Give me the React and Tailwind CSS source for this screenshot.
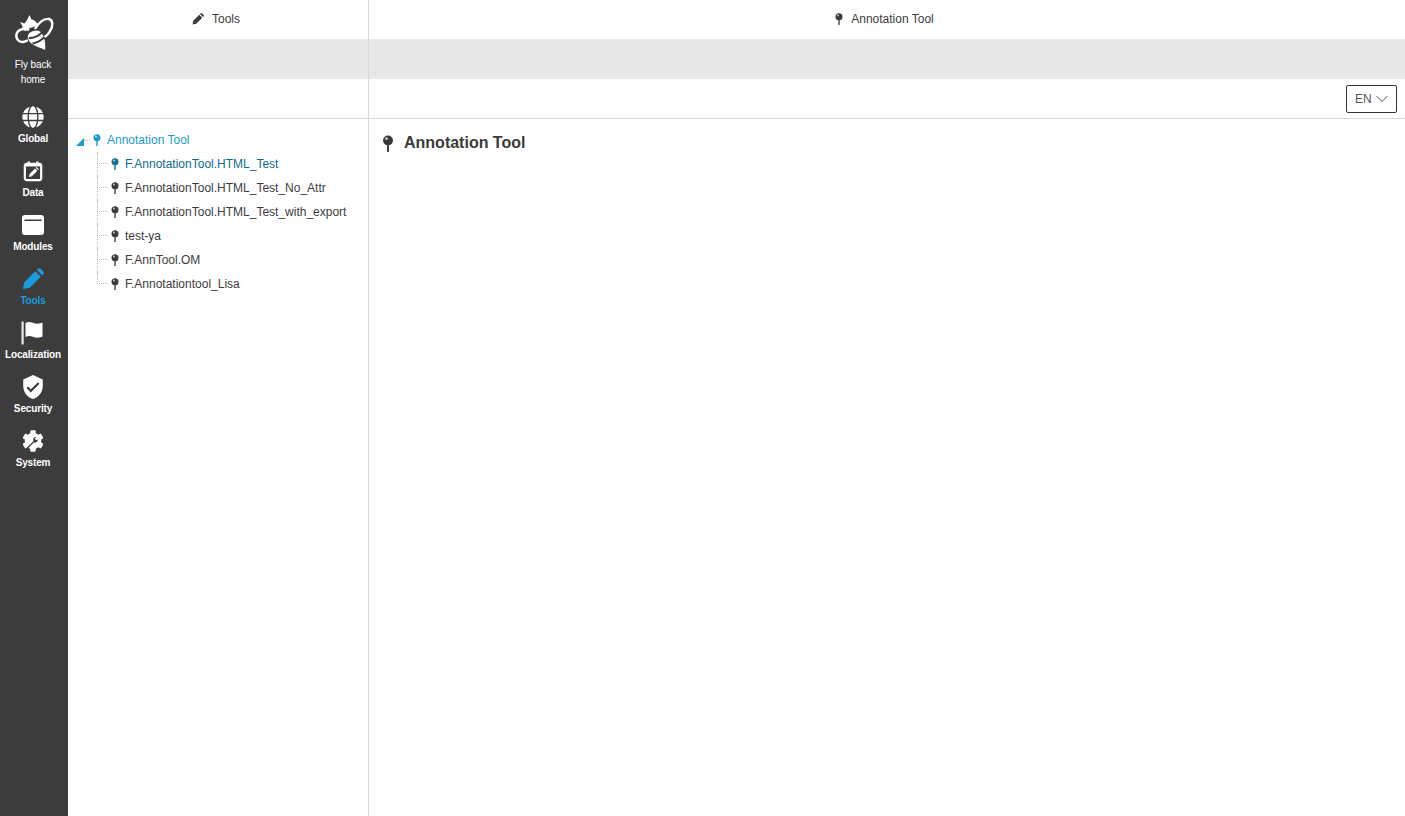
import { FaGlobe, FaCog } from 'react-icons/fa';
import { MdVerifiedUser } from 'react-icons/md';
import { ChevronDown } from 'lucide-react';

function BeeLogo() {
  return (
    <svg viewBox="10 10 46 44" className="w-[46px] h-[44px]" fill="none" stroke="white">
      <path d="M35 29C38 23 44 18 49 19C53 20 53.500 26 50 31C48 35 45 37 42 38" strokeWidth="2.400" />
      <path d="M29 30C24 28 18 29 16.500 34C15.500 39 19 42.500 23 42C25 41.700 26.500 41 28 40" strokeWidth="2.400" />
      <path d="M20 22L24.500 23.500L27 20L29.500 15L31.500 19.500C35 20 38 23 38 26.500C33 26.500 28 28.500 25 31C23 29.500 22 27.500 22.500 26Z" fill="white" stroke="none" />
      <path d="M28 34C32 29.500 38 29 41.500 32C45 37 46.500 44 45.500 50.500C40 48 32 46 29 41.500C27 38.500 27 36 28 34Z" fill="white" stroke="#3c3c3c" strokeWidth="1" />
      <path d="M29 38C34 38 38.500 36 42 32.500M32.500 43.500C37.500 42.500 41 40.500 44 37.500" stroke="#3c3c3c" strokeWidth="1.900" />
    </svg>
  );
}

function PenIcon({ className }) {
  return (
    <svg viewBox="0 0 24 24" className={className} fill="currentColor">
      <path d="M1 23L2.500 15.500L14.500 3.500L20.500 9.500L8.500 21.500Z" />
      <path d="M16 2L17 1C18 0 19.500 0 20.500 1L23 3.500C24 4.500 24 6 23 7L22 8Z" />
    </svg>
  );
}

function DataIcon() {
  return (
    <svg viewBox="0 0 22 24" className="w-[20px] h-[22px]">
      <path d="M5 1.500h2.500v3H5zM14.500 1.500H17v3h-2.500z" fill="white" />
      <rect x="2" y="4" width="18" height="18" rx="2" fill="none" stroke="white" strokeWidth="2.400" />
      <path d="M2 4h18v3H2z" fill="white" />
      <path d="M6.500 18.500l.8-3.300 6-6 2.500 2.500-6 6zM14 8.500l1-1 2.500 2.500-1 1z" fill="white" />
    </svg>
  );
}

function ModulesIcon() {
  return (
    <svg viewBox="0 0 22 20" className="w-[22px] h-[20px]">
      <path fillRule="evenodd" d="M3 0h16a3 3 0 0 1 3 3v14a3 3 0 0 1-3 3H3a3 3 0 0 1-3-3V3a3 3 0 0 1 3-3zM2.500 4.500v1.500h17V4.500z" fill="white" />
    </svg>
  );
}

function FlagIcon() {
  return (
    <svg viewBox="0 0 24 24" className="w-[24px] h-[24px]">
      <rect x="0.500" y="0.500" width="2.200" height="23" fill="#e9e9e9" />
      <path d="M4.500 2c3-1.500 5.500-.8 8 0s5 1.200 9-.5v14c-4 1.700-6.500 1.300-9 .5s-5-1.500-8 0z" fill="white" />
    </svg>
  );
}

function SystemIcon() {
  return (
    <span className="relative flex items-center justify-center w-[22px] h-[22px]">
      <FaCog className="text-white w-[22px] h-[22px]" />
      <svg viewBox="0 0 22 22" className="absolute inset-0 w-[22px] h-[22px]">
        <circle cx="11" cy="11" r="6.500" fill="white" />
        <path d="M5 17.500l6.500-6.500c-.8-2 .2-4 2.800-4.300l-1.300 2 1 1.500 2-.6c-.2 2.400-2.200 3.600-4.200 3L6 18.500z" fill="#3c3c3c" />
      </svg>
    </span>
  );
}

function Pin({ color = 'dark', size = 'sm' }) {
  const head = color === 'blue' ? '#1a9bd0' : color === 'teal' ? '#16708f' : '#3a3a3a';
  const stem = color === 'blue' ? '#1a9bd0' : color === 'teal' ? '#16708f' : '#444444';
  const cls = size === 'lg' ? 'w-[12px] h-[17px] shrink-0' : 'w-[8px] h-[12px] shrink-0';
  return (
    <svg viewBox="0 0 8 12" className={cls}>
      <rect x="3.300" y="6" width="1.400" height="6" fill={stem} />
      <circle cx="4" cy="3.800" r="3.500" fill={head} />
      <circle cx="3" cy="2.600" r="1" fill="white" opacity="0.700" />
    </svg>
  );
}

const navItems = [
  { name: 'Global', icon: <FaGlobe className="w-[22px] h-[22px]" /> },
  { name: 'Data', icon: <DataIcon /> },
  { name: 'Modules', icon: <ModulesIcon /> },
  { name: 'Tools', icon: <PenIcon className="w-[22px] h-[22px]" />, active: true },
  { name: 'Localization', icon: <FlagIcon /> },
  { name: 'Security', icon: <MdVerifiedUser className="w-[26px] h-[26px]" /> },
  { name: 'System', icon: <SystemIcon /> },
];

const treeItems = [
  { name: 'F.AnnotationTool.HTML_Test', selected: true },
  { name: 'F.AnnotationTool.HTML_Test_No_Attr' },
  { name: 'F.AnnotationTool.HTML_Test_with_export' },
  { name: 'test-ya' },
  { name: 'F.AnnTool.OM' },
  { name: 'F.Annotationtool_Lisa', last: true },
];

function Sidebar() {
  return (
    <aside className="w-[68px] shrink-0 bg-[#3c3c3c] flex flex-col items-center text-white pr-[2px]">
      <div className="flex flex-col items-center pt-[10px] w-full">
        <BeeLogo />
        <div className="text-[10px] leading-[15px] text-center mt-[3px] tracking-[-0.1px] whitespace-nowrap">Fly back<br />home</div>
      </div>
      <nav className="flex flex-col w-full mt-[17px]">
        {navItems.map((item) => (
          <div key={item.name} className={`h-[54px] flex flex-col items-center ${item.active ? 'text-[#1a9bdc]' : 'text-white'}`}>
            <div className="h-[26px] flex items-center justify-center">{item.icon}</div>
            <span className="text-[10px] font-bold leading-[14px] mt-[2px] tracking-[-0.15px] whitespace-nowrap">{item.name}</span>
          </div>
        ))}
      </nav>
    </aside>
  );
}

function TreePanel() {
  return (
    <div className="pl-[8px] pt-[9px] text-[12px] leading-[24px] text-[#3c3c3c]">
      <div className="flex items-center h-[24px]">
        <svg viewBox="0 0 8 8" className="w-[8px] h-[8px] mt-[3px] shrink-0">
          <path d="M8 0v8H0z" fill="#1a9bd0" />
        </svg>
        <div className="w-[6px] border-t border-dotted border-[#bbbbbb]" />
        <div className="ml-[3px] flex items-center"><Pin color="blue" /></div>
        <span className="ml-[6px] text-[#1a9bd0]">Annotation Tool</span>
      </div>
      <div className="pl-[21px]">
        {treeItems.map((t) => (
          <div key={t.name} className="flex items-stretch h-[24px]">
            <div className="w-[11px] shrink-0 flex flex-col">
              <div className="h-[12px] border-l border-b border-dotted border-[#bbbbbb]" />
              {!t.last && <div className="flex-1 border-l border-dotted border-[#bbbbbb]" />}
            </div>
            <div className="ml-[3px] flex items-center"><Pin color={t.selected ? 'teal' : 'dark'} /></div>
            <span className={`ml-[6px] whitespace-nowrap ${t.selected ? 'text-[#0f6b8c]' : ''}`}>{t.name}</span>
          </div>
        ))}
      </div>
    </div>
  );
}

export default function App() {
  return (
    <div className="flex h-[816px] w-[1405px] overflow-hidden bg-white font-['Liberation_Sans',Arial,sans-serif] text-[#3c3c3c]">
      <Sidebar />
      <div className="flex flex-col flex-1 min-w-0">
        <div className="flex h-[39px] shrink-0 text-[12px]">
          <div className="w-[301px] shrink-0 border-r border-[#d8d8d8] flex items-center justify-center gap-[8px] pr-[4px] pb-[1px]">
            <PenIcon className="w-[12px] h-[12px] text-[#3c3c3c]" />
            <span>Tools</span>
          </div>
          <div className="flex-1 flex items-center justify-center gap-[8px] pr-[5px] pb-[1px]">
            <Pin />
            <span>Annotation Tool</span>
          </div>
        </div>
        <div className="flex h-[40px] shrink-0 bg-[#e7e7e7]">
          <div className="w-[301px] shrink-0 border-r border-[#d8d8d8]" />
          <div className="flex-1" />
        </div>
        <div className="flex h-[40px] shrink-0 border-b border-[#d8d8d8]">
          <div className="w-[301px] shrink-0 border-r border-[#d8d8d8]" />
          <div className="flex-1 flex items-center justify-end pr-[8px]">
            <button className="w-[51px] h-[28px] border border-[#333333] rounded-[2px] flex items-center pl-[8px] text-[12px] text-[#555555]">
              EN <ChevronDown className="w-[20px] h-[20px] text-[#444444]" strokeWidth={1.2} />
            </button>
          </div>
        </div>
        <div className="flex flex-1 min-h-0">
          <div className="w-[301px] shrink-0 border-r border-[#d8d8d8]">
            <TreePanel />
          </div>
          <div className="flex-1 pl-[13px] pt-[14px]">
            <div className="flex items-center gap-[10px]">
              <Pin size="lg" />
              <h1 className="text-[16px] font-bold leading-[20px] text-[#3a3a3a]">Annotation Tool</h1>
            </div>
          </div>
        </div>
      </div>
    </div>
  );
}
